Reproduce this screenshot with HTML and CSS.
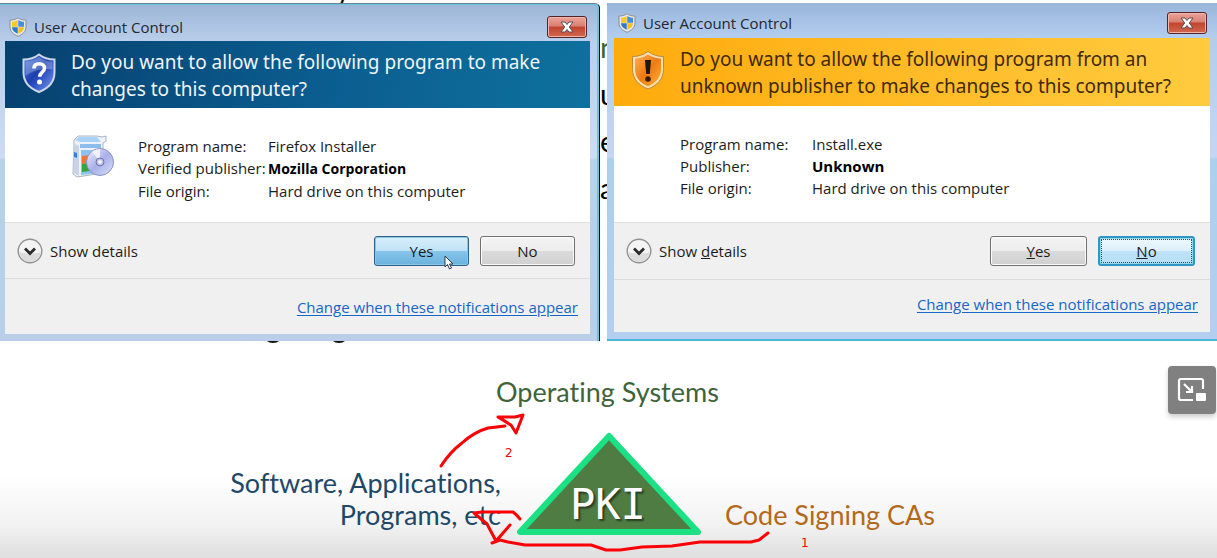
FILE: index.html
```html
<!DOCTYPE html>
<html lang="en">
<head>
<meta charset="utf-8">
<title>Code signing and PKI</title>
<link rel="stylesheet" href="styles.css">
</head>
<body>
<svg class="defs" width="0" height="0" aria-hidden="true">
  <defs>
    <linearGradient id="blueShield" x1="0" y1="0" x2="1" y2="1">
      <stop offset="0" stop-color="#5a86e6"/><stop offset=".45" stop-color="#1c3fae"/><stop offset=".55" stop-color="#2a4cc0"/><stop offset="1" stop-color="#7da0f0"/>
    </linearGradient>
    <linearGradient id="orangeShield" x1="0" y1="0" x2="1" y2="1">
      <stop offset="0" stop-color="#ffb05a"/><stop offset=".5" stop-color="#ee7a12"/><stop offset="1" stop-color="#ffb23c"/>
    </linearGradient>
    <linearGradient id="discShine" x1="0" y1="0" x2="1" y2="1">
      <stop offset="0" stop-color="#f4f5ff"/><stop offset=".5" stop-color="#a9aee8"/><stop offset="1" stop-color="#d9e4fa"/>
    </linearGradient>
    <symbol id="uac" viewBox="0 0 18 20">
      <path d="M9 .8C6.500 2.500 4 3 1 3v7c0 4.500 3.500 7.500 8 9.300 4.500-1.800 8-4.800 8-9.300V3C14 3 11.500 2.500 9 .8z" fill="#e4e7e6" stroke="#8a8f94" stroke-width="1"/>
      <path d="M8.700 3C7 4.200 5.200 4.700 3 4.800v5h5.700z" fill="#f7c92d"/>
      <path d="M9.300 3c1.700 1.200 3.500 1.700 5.700 1.800v5H9.300z" fill="#3f8fdc"/>
      <path d="M3 10.300h5.700v6.500C5.500 15.400 3.200 13.500 3 10.300z" fill="#2c78cc"/>
      <path d="M15 10.300H9.300v6.500c3.200-1.400 5.500-3.300 5.700-6.500z" fill="#f7c020"/>
    </symbol>
    <symbol id="closeX" viewBox="0 0 14 12">
      <path d="M1 1h4l2 2.500L9 1h4L9.300 6 13 11H9L7 8.500 5 11H1l3.700-5z" fill="#fff" stroke="#5b4a50" stroke-width="1"/>
    </symbol>
    <symbol id="chevron" viewBox="0 0 26 26">
      <circle cx="13" cy="13" r="11.800" fill="#f4f4f4" stroke="#929292" stroke-width="1.400"/>
      <path d="M2.500 14c3 2 18 2 21 0-.5 6-5 9.800-10.500 9.800S3 20 2.500 14z" fill="#dcdcdc"/>
      <path d="M8 10.500l5 5 5-5" fill="none" stroke="#2b2b2b" stroke-width="2.800"/>
    </symbol>
  </defs>
</svg>

<main class="page">
  <section class="windows">
    <span class="peek peek-top" aria-hidden="true">y</span>
    <article class="window window-verified">
      <header class="titlebar">
        <svg class="title-icon" aria-hidden="true"><use href="#uac"/></svg>
        <h2 class="title">User Account Control</h2>
        <button class="close" type="button" aria-label="Close"><svg class="close-icon" aria-hidden="true"><use href="#closeX"/></svg></button>
      </header>
      <div class="banner banner-blue">
        <svg class="shield" viewBox="0 0 34 40" aria-hidden="true">
          <path d="M17 1.500C12.500 5 7 6.500 1.500 6.500v13C1.500 29 8 35.500 17 39c9-3.500 15.500-10 15.500-19.500v-13C27 6.500 21.500 5 17 1.500z" fill="url(#blueShield)" stroke="#cdd6e6" stroke-width="2"/>
          <path d="M3.500 8.500C9 8.300 13 7 17 4c4 3 8 4.300 13.500 4.500v8C20 15 10 18 3.600 23z" fill="#fff" opacity=".25"/>
          <path d="M12 15.500c0-3.300 2.300-4.700 5.200-4.700 3 0 5.300 1.600 5.300 4.500 0 3.800-4.800 4-4.800 8.500" fill="none" stroke="#fff" stroke-width="3.500"/>
          <circle cx="17.500" cy="29" r="2.500" fill="#fff"/>
        </svg>
        <p class="question">Do you want to allow the following program to make<br>changes to this computer?</p>
      </div>
      <div class="details">
        <svg class="installer" viewBox="0 0 44 44" aria-hidden="true">
          <path d="M3 5l4-4h19l5 1 4-1v5l-3 2v30l-26 4-4-3z" fill="#eef2f8" stroke="#aab4c4" stroke-width="1"/>
          <path d="M4 5l4-3h18l4 5H9z" fill="#a8d2f5"/>
          <path d="M9 9h21v4H9z" fill="#8dbdec"/>
          <path d="M2 8l6 3v30l-5-3z" fill="#c8d4e5"/>
          <path d="M3 17l3 1v5l-3-1z" fill="#3980d9"/>
          <path d="M10 15h19v23l-19 2z" fill="#8ec3f0"/>
          <path d="M11 21l8-1v8l-8 1z" fill="#ee7438"/>
          <path d="M11 29l8-1v8l-8 1z" fill="#35a43c"/>
          <circle cx="29" cy="27" r="13.500" fill="url(#discShine)" stroke="#8d92c4" stroke-width="1"/>
          <path d="M29 27L21 16.500a13 13 0 0 1 8-2.500z" fill="#fff" opacity=".7"/>
          <circle cx="29" cy="27" r="4" fill="#b9bfe4" stroke="#7078b0" stroke-width="1"/>
          <circle cx="29" cy="27" r="1.800" fill="#fff"/>
        </svg>
        <dl class="facts">
          <dt>Program name:</dt><dd>Firefox Installer</dd>
          <dt>Verified publisher:</dt><dd><strong>Mozilla Corporation</strong></dd>
          <dt>File origin:</dt><dd>Hard drive on this computer</dd>
        </dl>
      </div>
      <div class="actions">
        <button class="expander" type="button"><svg class="expander-icon" aria-hidden="true"><use href="#chevron"/></svg>Show details</button>
        <button class="btn btn-hot" type="button">Yes
          <svg class="cursor" viewBox="0 0 12 18" aria-hidden="true"><path d="M1 1v11l2.500-2.500L5.500 14l2-1-2-4H9z" fill="#fff" stroke="#333a4c" stroke-width="1"/></svg>
        </button>
        <button class="btn" type="button">No</button>
      </div>
      <footer class="foot"><a class="link" href="#">Change when these notifications appear</a></footer>
    </article>

    <div class="gap" aria-hidden="true"><span class="letter letter-green">n</span><span class="letter">u</span><span class="letter">e</span><span class="letter">a</span></div>

    <article class="window window-unknown">
      <header class="titlebar">
        <svg class="title-icon" aria-hidden="true"><use href="#uac"/></svg>
        <h2 class="title">User Account Control</h2>
        <button class="close" type="button" aria-label="Close"><svg class="close-icon" aria-hidden="true"><use href="#closeX"/></svg></button>
      </header>
      <div class="banner banner-amber">
        <svg class="shield" viewBox="0 0 34 40" aria-hidden="true">
          <path d="M17 1.500C12.500 5 7 6.500 1.500 6.500v13C1.500 29 8 35.500 17 39c9-3.500 15.500-10 15.500-19.500v-13C27 6.500 21.500 5 17 1.500z" fill="#f6dfae" stroke="#b98a3c" stroke-width="1"/>
          <path d="M17 4.500c-4 2.800-8.500 4-13 4.200V19.500C4 27.500 9.500 33 17 36.300 24.500 33 30 27.500 30 19.500V8.700c-4.500-.2-9-1.400-13-4.200z" fill="url(#orangeShield)"/>
          <path d="M14 10h6l-1.200 14h-3.600z" fill="#22160c"/>
          <circle cx="17" cy="29" r="2.800" fill="#3a1c08"/>
        </svg>
        <p class="question">Do you want to allow the following program from an<br>unknown publisher to make changes to this computer?</p>
      </div>
      <div class="details">
        <dl class="facts">
          <dt>Program name:</dt><dd>Install.exe</dd>
          <dt>Publisher:</dt><dd><strong>Unknown</strong></dd>
          <dt>File origin:</dt><dd>Hard drive on this computer</dd>
        </dl>
      </div>
      <div class="actions">
        <button class="expander" type="button"><svg class="expander-icon" aria-hidden="true"><use href="#chevron"/></svg><span>Show <u>d</u>etails</span></button>
        <button class="btn" type="button"><u>Y</u>es</button>
        <button class="btn btn-default" type="button"><u>N</u>o</button>
      </div>
      <footer class="foot"><a class="link" href="#">Change when these notifications appear</a></footer>
    </article>
  </section>

  <section class="diagram">
    <div class="canvas">
      <svg class="triangle" viewBox="0 0 188 106" aria-hidden="true"><path d="M95 5L6 101h178z" fill="#4f7c43" stroke="#1be084" stroke-width="6" stroke-linejoin="round"/></svg>
      <span class="node node-pki">PKI</span>
      <span class="node node-os">Operating Systems</span>
      <span class="node node-software">Software, Applications,<br>Programs, etc</span>
      <span class="node node-ca">Code Signing CAs</span>
      <svg class="ink" viewBox="0 0 761 217" aria-hidden="true">
        <path d="M39 0h12q-2 2-6 2t-6-2zM105 0h12q-2 2-6 2t-6-2z" fill="#111"/>
        <g fill="none" stroke="#fb0006" stroke-width="3" stroke-linecap="round" stroke-linejoin="round">
          <path d="M213 125Q222 111 234 102Q246 91 260 87L277 85"/>
          <path d="M270 76H287L295 74L288 92L283 84Z"/>
          <path d="M540 192l-9 7-8 2h-51l-28 4-30 1-22 3h-14l-15-5h-66l-17-3-8-2-8 3"/>
          <path d="M282 184l-14 16-9-17-13-11 8-1h31q4 3 7 7"/>
        </g>
      </svg>
      <span class="mark mark-two">2</span>
      <span class="mark mark-one">1</span>
    </div>
    <button class="pip" type="button" aria-label="Picture in picture">
      <svg class="pip-icon" viewBox="0 0 30 26" fill="none" stroke="#fff" stroke-width="2.200" aria-hidden="true">
        <path d="M16 23H4q-2 0-2-2V4q0-2 2-2h20q2 0 2 2v8"/><path d="M7 7l8 8M15 9v6H9"/><rect x="19" y="16" width="10" height="8" rx="1" fill="#fff" stroke="none"/>
      </svg>
    </button>
  </section>
</main>
</body>
</html>
```
FILE: styles.css
```css
* { box-sizing: border-box; }
body { margin: 0; background: #fff; color: #1c1c1c; font: 15px/22px "Open Sans", "Noto Sans", sans-serif; }
button { font: inherit; color: inherit; cursor: pointer; }
p, h2, dl, dd { margin: 0; }
.defs { position: absolute; }
.page { min-height: 100vh; display: flex; flex-direction: column; overflow: hidden; }

.windows { position: relative; display: grid; grid-template-columns: 600fr 7px 610fr; padding-top: 3px; }
.peek { position: absolute; color: #000; font: 28px/28px Lato, sans-serif; }
.peek-top { left: 336px; top: -25px; }
.gap { overflow: hidden; padding-top: 20px; background: #fff; }
.letter { display: block; height: 47px; color: #000; font: 29px/47px Lato, sans-serif; }
.letter-green { color: #3d6633; }

.window { position: relative; display: flex; flex-direction: column; min-height: 338px; }
.window-verified {
  padding: 0 9px 7px 5px;
  border-right: 1px solid #000;
  border-top: 1px solid #72818f;
  border-top-right-radius: 5px;
  background: linear-gradient(#9db6d6, #b9cfeb 38px, #cddcf2 154px, #b7d2e9 156px, #b9cfe9);
  box-shadow: inset -2px 1px #63c7e0;
}
.window-unknown {
  padding: 0 7px 7px;
  border-bottom: 2px solid #49b8d6;
  background: linear-gradient(#98b5da, #b3cdee 34px, #c5d6f4 154px, #abd0ee 156px, #b4cef0);
}
.titlebar { display: flex; flex: none; align-items: center; gap: 7px; height: 37px; padding: 8px 3px 0 4px; }
.window-unknown .titlebar { height: 35px; padding-top: 4px; }
.title-icon { width: 18px; height: 20px; }
.title { flex: 1; font-size: 15px; font-weight: 400; color: #232832; }
.close {
  display: grid; place-items: center; width: 40px; height: 22px; padding: 0;
  border: 1px solid #50262b; border-radius: 3px;
  background: linear-gradient(#eba397, #d98174 45%, #c2442e 50%, #d2674f);
  box-shadow: inset 0 0 0 1px #f2b5ab;
}
.close-icon { width: 14px; height: 12px; }

.banner { display: flex; flex: none; gap: 15px; height: 67px; padding: 8px 17px; }
.banner-blue { background: linear-gradient(100deg, #06406f, #0b5d90 55%, #0e719d); color: #eef5fa; }
.banner-amber { background: linear-gradient(90deg, #feab0c, #ffbb27 50%, #ffcb3f); color: #42290a; height: 68px; }
.shield { flex: none; width: 34px; height: 40px; margin-top: 4px; }
.question { font: 19px/27px "Noto Sans", sans-serif; white-space: nowrap; }

.details { flex: 1; display: flex; gap: 23px; padding: 27px 66px 0; background: #fff; }
.installer { flex: none; width: 44px; height: 44px; }
.facts { display: grid; grid-template-columns: auto 1fr; column-gap: 2px; align-content: start; white-space: nowrap; }
.facts dt { min-width: 128px; }
.window-unknown .facts dt { min-width: 130px; }
.facts strong { color: #000; }
.window-verified strong { font-size: 14px; }

.actions { display: flex; flex: none; align-items: center; gap: 11px; height: 56px; padding: 0 15px 0 12px; background: #f0f0f0; border-top: 1px solid #dfdfdf; }
.window-unknown .actions { height: 57px; }
.expander { display: flex; align-items: center; gap: 7px; margin-right: auto; padding: 0; border: 0; background: none; }
.expander-icon { width: 26px; height: 26px; }
.btn {
  position: relative; width: 95px; height: 30px; padding: 0;
  border: 1px solid #707070; border-radius: 3px;
  background: linear-gradient(#f4f4f4, #ececec 50%, #dbdbdb 51%, #d0d0d0);
  box-shadow: inset 0 0 0 1px #fbfbfb;
}
.window-unknown .btn { width: 97px; }
.btn-hot { border-color: #2c628b; background: linear-gradient(#d8eefb, #bfe3f8 50%, #86c5ea 51%, #6ab2de); box-shadow: inset 0 0 0 1px #8cc4e4; }
.btn-default { background: linear-gradient(#eef8fd, #dcf0fb 50%, #bfe3f8 51%, #b5def6); border: 2px solid #3097c4; box-shadow: inset 0 0 0 1px #8fd8f0; }
.btn-default::after { content: ""; position: absolute; inset: 1px; border: 1px dotted #244c66; }
.cursor { position: absolute; left: 69px; top: 18px; width: 12px; height: 18px; }
.foot { flex: none; height: 56px; padding: 17px 12px; background: #f0f0f0; border-top: 1px solid #dcdcdc; text-align: right; }
.window-unknown .foot { height: 53px; padding-top: 13px; }
.link { color: #1766c8; text-underline-offset: 2px; }

.diagram { position: relative; flex: 1; min-height: 217px; background: linear-gradient(#fff 62%, #f2f2f2 85%, #dedede); }
.canvas { position: relative; width: 761px; height: 217px; margin: 0 auto; }
.node { position: absolute; white-space: nowrap; font: 27px/32px Lato, sans-serif; font-variant-ligatures: none; }
.node-os { left: 268px; top: 35px; color: #3f633a; }
.node-software { right: 488px; top: 126px; color: #1f4868; text-align: right; }
.node-ca { left: 497px; top: 158px; color: #b3691b; }
.node-pki { left: 342px; top: 140px; color: #fff; font: 42px/48px "DejaVu Sans Mono", monospace; text-shadow: 2px 2px 2px #263d22; }
.triangle { position: absolute; left: 286px; top: 90px; width: 188px; height: 106px; }
.ink { position: absolute; left: 0; top: 0; width: 761px; height: 217px; }
.mark { position: absolute; color: #fb0006; font: 12px/14px "DejaVu Sans", sans-serif; }
.mark-two { left: 277px; top: 105px; }
.mark-one { left: 573px; top: 195px; }
.pip { position: absolute; right: 1px; top: 25px; display: grid; place-items: center; width: 48px; height: 48px; padding: 0; border: 0; border-radius: 4px; background: #808080; box-shadow: 0 3px 5px #0003; }
.pip-icon { width: 30px; height: 26px; }
```
